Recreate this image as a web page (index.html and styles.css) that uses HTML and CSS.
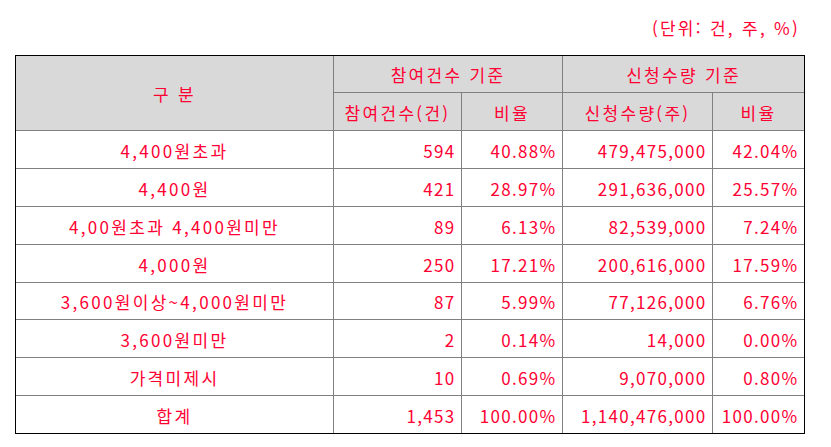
FILE: index.html
```html
<!DOCTYPE html>
<html lang="ko">
<head>
<meta charset="utf-8">
<title>수요예측 참여내역</title>
<link rel="stylesheet" href="styles.css">
</head>
<body>
<div class="wrap">
  <div class="unit">(단위: 건, 주, %)</div>
  <table class="grid">
    <colgroup>
      <col class="c1"><col class="c2"><col class="c3"><col class="c4"><col class="c5">
    </colgroup>
    <thead>
      <tr class="h1">
        <th rowspan="2" class="cat">구 분</th>
        <th colspan="2">참여건수 기준</th>
        <th colspan="2" class="last">신청수량 기준</th>
      </tr>
      <tr class="h2">
        <th>참여건수(건)</th>
        <th>비율</th>
        <th>신청수량(주)</th>
        <th class="last">비율</th>
      </tr>
    </thead>
    <tbody>
      <tr><td class="name">4,400원초과</td><td>594</td><td>40.88%</td><td>479,475,000</td><td class="last">42.04%</td></tr>
      <tr><td class="name">4,400원</td><td>421</td><td>28.97%</td><td>291,636,000</td><td class="last">25.57%</td></tr>
      <tr><td class="name">4,00원초과 4,400원미만</td><td>89</td><td>6.13%</td><td>82,539,000</td><td class="last">7.24%</td></tr>
      <tr><td class="name">4,000원</td><td>250</td><td>17.21%</td><td>200,616,000</td><td class="last">17.59%</td></tr>
      <tr class="short"><td class="name">3,600원이상~4,000원미만</td><td>87</td><td>5.99%</td><td>77,126,000</td><td class="last">6.76%</td></tr>
      <tr><td class="name">3,600원미만</td><td>2</td><td>0.14%</td><td>14,000</td><td class="last">0.00%</td></tr>
      <tr><td class="name">가격미제시</td><td>10</td><td>0.69%</td><td>9,070,000</td><td class="last">0.80%</td></tr>
      <tr class="end"><td class="name">합계</td><td>1,453</td><td>100.00%</td><td>1,140,476,000</td><td class="last">100.00%</td></tr>
    </tbody>
  </table>
</div>
</body>
</html>
```
FILE: styles.css
```css
html, body {
  margin: 0;
  padding: 0;
  background: #fff;
}
body {
  font-family: "Noto Sans CJK KR", "Noto Sans", sans-serif;
  font-size: 17px;
  color: #ff0033;
  letter-spacing: 2.3px;
}
.wrap {
  width: 790px;
  padding: 18px 0 0 15px;
}
.unit {
  text-align: right;
  line-height: 20px;
  height: 20px;
  padding-right: 5px;
  margin-bottom: 17px;
}
.grid {
  width: 790px;
  border-collapse: separate;
  border-spacing: 0;
  border: 1px solid #000;
  table-layout: fixed;
}
.c1 { width: 318px; }
.c2 { width: 128px; }
.c3 { width: 101px; }
.c4 { width: 150px; }
.c5 { width: 91px; }
.grid th,
.grid td {
  box-sizing: border-box;
  border-right: 1px solid #808080;
  border-bottom: 1px solid #808080;
  line-height: 20px;
  padding: 2px 5.5px 0 0;
  font-weight: normal;
  white-space: nowrap;
  vertical-align: middle;
}
.grid th {
  background: #d9d9d9;
  text-align: center;
  padding: 2px 0 0 0;
}
.grid .last { border-right: 0; }
.grid .h1 th { height: 37px; }
.grid .h2 th { height: 38px; }
.grid td { height: 38px; text-align: right; letter-spacing: 1.3px; }
.grid td.name { text-align: center; padding-right: 0; letter-spacing: 2.3px; }
.grid .short td { height: 37px; }
.grid .end td { border-bottom: 0; height: 37px; }
```
